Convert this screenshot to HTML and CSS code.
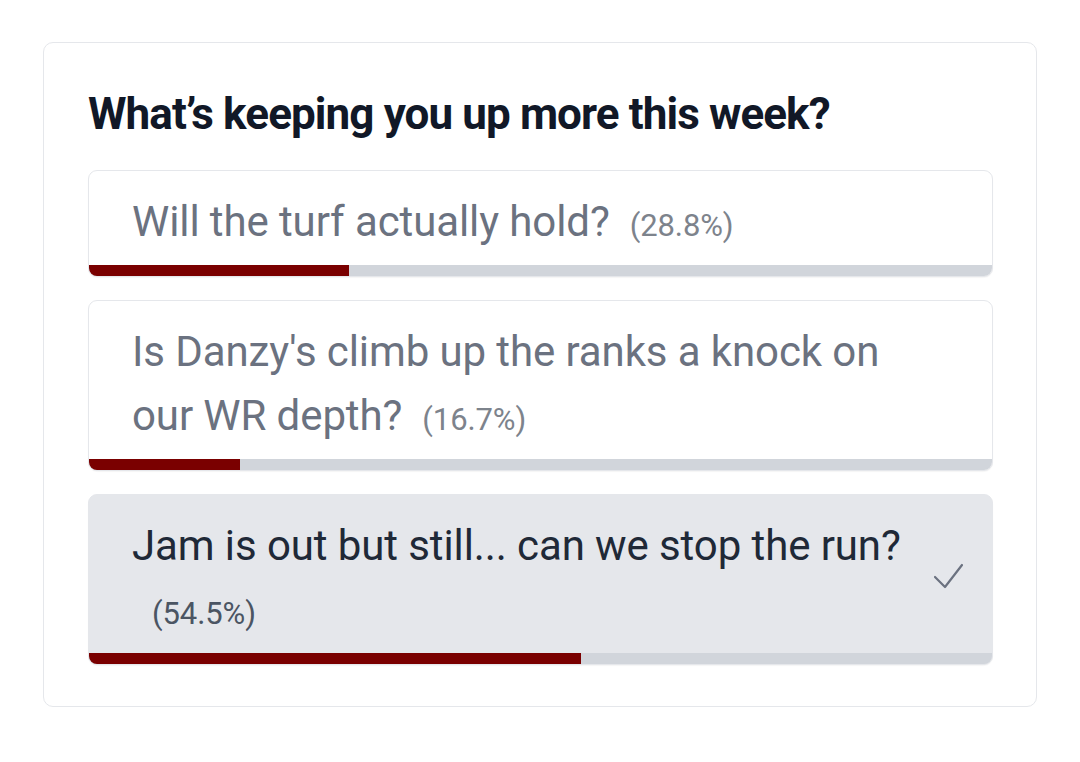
FILE: index.html
```html
<!DOCTYPE html>
<html lang="en">
<head>
<meta charset="utf-8">
<title>Poll</title>
<link rel="stylesheet" href="styles.css">
</head>
<body>
<div class="card">
  <h2 class="title">What’s keeping you up more this week?</h2>
  <div class="options">
    <div class="option">
      <div class="option-body">
        <p class="label">Will the turf actually hold?<span class="pct">(28.8%)</span></p>
      </div>
      <div class="track"><div class="fill" style="width:28.8%"></div></div>
    </div>
    <div class="option">
      <div class="option-body">
        <p class="label">Is Danzy's climb up the ranks a knock on our WR depth?<span class="pct">(16.7%)</span></p>
      </div>
      <div class="track"><div class="fill" style="width:16.7%"></div></div>
    </div>
    <div class="option selected">
      <div class="option-body">
        <p class="label">Jam is out but still... can we stop the run?<span class="pct">(54.5%)</span></p>
        <svg class="check" width="32" height="28" viewBox="0 0 32 28" aria-hidden="true"><path d="M3 15 L13 25 L30 3" fill="none" stroke="#6b7280" stroke-width="2.2" stroke-linecap="round" stroke-linejoin="round"/></svg>
      </div>
      <div class="track"><div class="fill" style="width:54.5%"></div></div>
    </div>
  </div>
</div>
</body>
</html>
```
FILE: styles.css
```css
* { box-sizing: border-box; }
html, body { margin: 0; padding: 0; background: #ffffff; }
body {
  font-family: Roboto, "Liberation Sans", Arial, sans-serif;
  padding: 42px 43px 0 43px;
}
.card {
  width: 994px;
  border: 1.5px solid #e5e7eb;
  border-radius: 10px;
  padding: 43px 43px 41px 44px;
  background: #fff;
}
.title {
  margin: 0 0 28px 0;
  font-size: 44px;
  line-height: 56px;
  font-weight: 700;
  color: #111827;
  letter-spacing: -0.9px;
}
.options {
  display: flex;
  flex-direction: column;
  gap: 23px;
}
.option {
  border: 1.5px solid #e5e7eb;
  border-radius: 9px;
  overflow: hidden;
  background: #fff;
  box-shadow: 0 1px 1px rgba(0,0,0,0.04);
}
.option.selected {
  background: #e5e7eb;
  border-color: #e5e7eb;
}
.option-body {
  display: flex;
  align-items: center;
  padding: 19px 28px 11px 43px;
}
.label {
  margin: 0;
  flex: 1;
  padding-right: 18px;
  font-size: 42px;
  line-height: 64px;
  color: #6b7280;
  letter-spacing: -0.1px;
}
.selected .label { color: #1f2937; padding-right: 0; }
.selected .option-body { padding-bottom: 11px; }
.pct {
  display: inline-block;
  margin-left: 20px;
  font-size: 31px;
  line-height: 36px;
  color: #7d838c;
}
.selected .pct { color: #4b5563; }
.check {
  flex: none;
  margin-left: 20px;
  margin-top: -5px;
}
.track {
  height: 11px;
  background: #d1d5db;
}
.fill {
  height: 100%;
  background: #7a0000;
}
```
